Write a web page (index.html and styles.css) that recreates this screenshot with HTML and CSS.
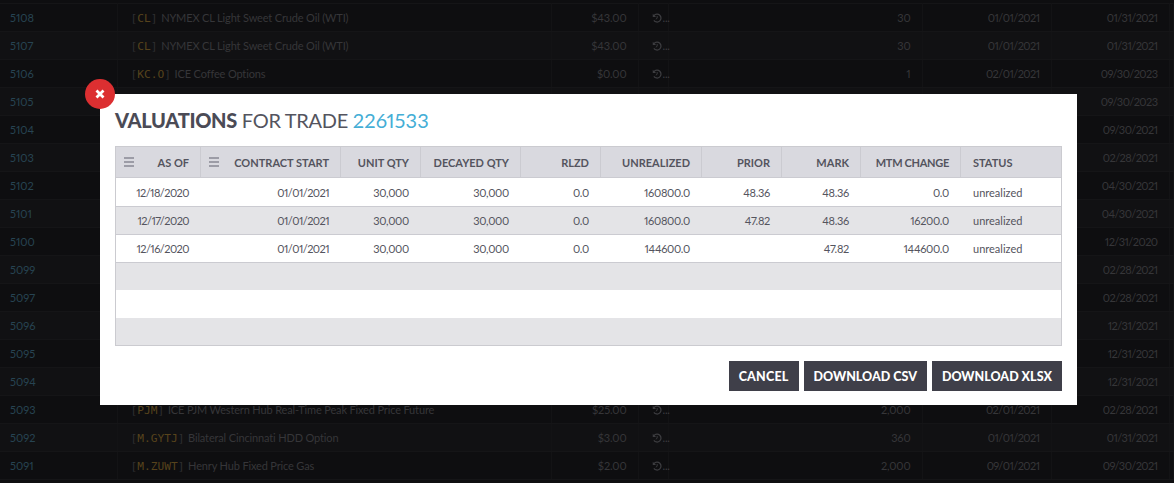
FILE: index.html
```html
<!DOCTYPE html>
<html lang="en">
<head>
<meta charset="utf-8">
<title>Valuations for trade 2261533</title>
<link rel="stylesheet" href="styles.css">
</head>
<body>
<svg class="defs" aria-hidden="true">
  <symbol id="hist" viewBox="0 0 12 12">
    <path d="M2.4 3.2A4.7 4.7 0 1 1 2.2 8.8" fill="none" stroke="currentColor" stroke-width="1.5"/>
    <path d="M.9 .9v4h4z" fill="currentColor"/>
    <path d="M6.2 3.6V6.3L4.6 7.4" fill="none" stroke="currentColor" stroke-width="1.1"/>
  </symbol>
  <symbol id="bars" viewBox="0 0 10 10">
    <path d="M0 0h10v2H0zM0 4h10v2H0zM0 8h10v2H0z" fill="currentColor"/>
  </symbol>
</svg>

<table class="bg">
  <colgroup>
    <col class="b1"><col class="b2"><col class="b3"><col class="b4"><col class="b5"><col class="b6"><col class="b7"><col class="b8">
  </colgroup>
  <tbody>
    <tr><td class="id">5108</td><td><span class="tk"><i>[</i><b>CL</b><i>]</i></span> NYMEX CL Light Sweet Crude Oil (WTI)</td><td class="r">$43.00</td><td class="act"><svg class="h"><use href="#hist"/></svg><span class="dots">...</span></td><td class="r">30</td><td class="r d">01/01/2021</td><td class="r d">01/31/2021</td><td></td></tr>
    <tr><td class="id">5107</td><td><span class="tk"><i>[</i><b>CL</b><i>]</i></span> NYMEX CL Light Sweet Crude Oil (WTI)</td><td class="r">$43.00</td><td class="act"><svg class="h"><use href="#hist"/></svg><span class="dots">...</span></td><td class="r">30</td><td class="r d">01/01/2021</td><td class="r d">01/31/2021</td><td></td></tr>
    <tr><td class="id">5106</td><td><span class="tk"><i>[</i><b>KC.O</b><i>]</i></span> ICE Coffee Options</td><td class="r">$0.00</td><td class="act"><svg class="h"><use href="#hist"/></svg><span class="dots">...</span></td><td class="r">1</td><td class="r d">02/01/2021</td><td class="r d">09/30/2023</td><td></td></tr>
    <tr><td class="id">5105</td><td></td><td></td><td></td><td></td><td></td><td class="r d">09/30/2023</td><td></td></tr>
    <tr><td class="id">5104</td><td></td><td></td><td></td><td></td><td></td><td class="r d">09/30/2021</td><td></td></tr>
    <tr><td class="id">5103</td><td></td><td></td><td></td><td></td><td></td><td class="r d">02/28/2021</td><td></td></tr>
    <tr><td class="id">5102</td><td></td><td></td><td></td><td></td><td></td><td class="r d">04/30/2021</td><td></td></tr>
    <tr><td class="id">5101</td><td></td><td></td><td></td><td></td><td></td><td class="r d">04/30/2021</td><td></td></tr>
    <tr><td class="id">5100</td><td></td><td></td><td></td><td></td><td></td><td class="r d">12/31/2020</td><td></td></tr>
    <tr><td class="id">5099</td><td></td><td></td><td></td><td></td><td></td><td class="r d">02/28/2021</td><td></td></tr>
    <tr><td class="id">5097</td><td></td><td></td><td></td><td></td><td></td><td class="r d">02/28/2021</td><td></td></tr>
    <tr><td class="id">5096</td><td></td><td></td><td></td><td></td><td></td><td class="r d">12/31/2021</td><td></td></tr>
    <tr><td class="id">5095</td><td></td><td></td><td></td><td></td><td></td><td class="r d">12/31/2021</td><td></td></tr>
    <tr><td class="id">5094</td><td></td><td></td><td></td><td></td><td></td><td class="r d">12/31/2021</td><td></td></tr>
    <tr><td class="id">5093</td><td><span class="tk"><i>[</i><b>PJM</b><i>]</i></span> ICE PJM Western Hub Real-Time Peak Fixed Price Future</td><td class="r">$25.00</td><td class="act"><svg class="h"><use href="#hist"/></svg><span class="dots">...</span></td><td class="r">2,000</td><td class="r d">02/01/2021</td><td class="r d">02/28/2021</td><td></td></tr>
    <tr><td class="id">5092</td><td><span class="tk"><i>[</i><b>M.GYTJ</b><i>]</i></span> Bilateral Cincinnati HDD Option</td><td class="r">$3.00</td><td class="act"><svg class="h"><use href="#hist"/></svg><span class="dots">...</span></td><td class="r">360</td><td class="r d">01/01/2021</td><td class="r d">01/31/2021</td><td></td></tr>
    <tr><td class="id">5091</td><td><span class="tk"><i>[</i><b>M.ZUWT</b><i>]</i></span> Henry Hub Fixed Price Gas</td><td class="r">$2.00</td><td class="act"><svg class="h"><use href="#hist"/></svg><span class="dots">...</span></td><td class="r">2,000</td><td class="r d">09/01/2021</td><td class="r d">09/30/2021</td><td></td></tr>
  </tbody>
</table>

<section class="modal">
  <button class="close" type="button" aria-label="Close">
    <svg viewBox="0 0 10 10" class="close-x"><path d="M1.5 1.5l7 7M8.5 1.5l-7 7" stroke="currentColor" stroke-width="2.8" fill="none"/></svg>
  </button>
  <h1 class="title"><strong>VALUATIONS</strong> FOR TRADE <span class="trade">2261533</span></h1>
  <table class="val">
    <colgroup>
      <col class="c1"><col class="c2"><col class="c3"><col class="c4"><col class="c5"><col class="c6"><col class="c7"><col class="c8"><col class="c9"><col class="c10">
    </colgroup>
    <thead>
      <tr>
        <th><div class="hd"><svg class="menu"><use href="#bars"/></svg><span>AS OF</span></div></th>
        <th><div class="hd"><svg class="menu"><use href="#bars"/></svg><span>CONTRACT START</span></div></th>
        <th>UNIT QTY</th><th>DECAYED QTY</th><th>RLZD</th><th>UNREALIZED</th><th>PRIOR</th><th>MARK</th><th class="tight">MTM CHANGE</th><th class="l">STATUS</th>
      </tr>
    </thead>
    <tbody>
      <tr class="first"><td class="d">12/18/2020</td><td class="d">01/01/2021</td><td>30,000</td><td>30,000</td><td>0.0</td><td>160800.0</td><td>48.36</td><td>48.36</td><td>0.0</td><td class="l">unrealized</td></tr>
      <tr><td class="d">12/17/2020</td><td class="d">01/01/2021</td><td>30,000</td><td>30,000</td><td>0.0</td><td>160800.0</td><td>47.82</td><td>48.36</td><td>16200.0</td><td class="l">unrealized</td></tr>
      <tr><td class="d">12/16/2020</td><td class="d">01/01/2021</td><td>30,000</td><td>30,000</td><td>0.0</td><td>144600.0</td><td></td><td>47.82</td><td>144600.0</td><td class="l">unrealized</td></tr>
      <tr class="blank grey"><td colspan="10"></td></tr>
      <tr class="blank"><td colspan="10"></td></tr>
      <tr class="blank grey"><td colspan="10"></td></tr>
    </tbody>
  </table>
  <footer class="actions">
    <button class="btn" type="button">CANCEL</button>
    <button class="btn" type="button">DOWNLOAD CSV</button>
    <button class="btn" type="button">DOWNLOAD XLSX</button>
  </footer>
</section>
</body>
</html>
```

FILE: styles.css
```css
* { box-sizing: border-box; }
html, body { margin: 0; height: 100%; }
body {
  background: #0e0e10;
  font-family: "Lato", "Open Sans", sans-serif;
  font-variant-numeric: proportional-nums;
  overflow: hidden;
  padding-top: 3px;
}
.defs { display: none; }

/* dimmed page behind the dialog */
.bg {
  width: 1174px;
  table-layout: fixed;
  border-collapse: collapse;
  color: #363639;
  font-size: 11px;
  border-top: 1px solid #151517;
}
.b1 { width: 117px; }
.b2 { width: 434px; }
.b3 { width: 87px; }
.b4 { width: 30px; }
.b5 { width: 254px; }
.b6 { width: 129px; }
.b7 { width: 118px; }
.bg tr { height: 28px; }
.bg tr:nth-child(odd) { background: #0e0e10; }
.bg tr:nth-child(even) { background: #111113; }
.bg td {
  padding: 0 11px;
  white-space: nowrap;
  overflow: hidden;
  border-bottom: 1px solid #151517;
  border-right: 1px solid #131315;
  letter-spacing: -0.15px;
}
.bg .act { padding: 0 0 0 13px; letter-spacing: 0; overflow: visible; }
.bg .r { text-align: right; }
.bg .d { letter-spacing: -0.55px; }
.bg .id { color: #274452; padding-left: 10px; letter-spacing: 0; }
.tk { font-family: "DejaVu Sans Mono", monospace; font-size: 11.2px; letter-spacing: 0; margin: 0 1px 0 2px; }
.tk i { font-style: normal; color: #2e2e30; }
.tk b { font-weight: 400; color: #57431c; }
.h { width: 10px; height: 10px; vertical-align: -1px; color: #3d3d40; }
.dots { color: #3d3d40; margin-left: 1px; letter-spacing: -0.2px; }

/* dialog */
.modal {
  position: absolute;
  left: 100px;
  top: 94px;
  width: 977px;
  height: 311px;
  background: #fff;
  padding: 14px 15px 0;
  color: #54545e;
}
.close {
  position: absolute;
  left: -15px;
  top: -15px;
  width: 30px;
  height: 30px;
  border: 0;
  padding: 0;
  border-radius: 50%;
  background: #dc2f31;
  color: #fff;
  display: flex;
  align-items: center;
  justify-content: center;
}
.close-x { width: 10px; height: 10px; }
.title {
  margin: 0 0 14px;
  font-size: 20px;
  line-height: 24px;
  font-weight: 400;
  color: #54545e;
  letter-spacing: -0.3px;
}
.title strong { font-weight: 900; color: #4b4b56; }
.trade { color: #45aed6; letter-spacing: 0.1px; }

.val {
  width: 947px;
  table-layout: fixed;
  border-collapse: separate;
  border-spacing: 0;
  border: 1px solid #cbcbd0;
  font-size: 11px;
}
.c1 { width: 85px; }
.c2 { width: 140px; }
.c3 { width: 80px; }
.c4 { width: 100px; }
.c5 { width: 80px; }
.c6 { width: 101px; }
.c7 { width: 80px; }
.c8 { width: 79px; }
.c9 { width: 100px; }
.val th {
  height: 31px;
  padding: 0 11px 0 8px;
  background: #d9d9df;
  color: #54545e;
  font-weight: 700;
  font-size: 11px;
  text-align: right;
  border-right: 1px solid #cbcbd1;
  border-bottom: 1px solid #cbcbd1;
  white-space: nowrap;
}
.val th:last-child { border-right: 0; }
.val .tight { letter-spacing: -0.3px; }
.hd { display: flex; justify-content: space-between; align-items: center; }
.menu { width: 10px; height: 10px; color: #9c9ca6; }
.val td {
  height: 28px;
  padding: 0 12px 0 4px;
  text-align: right;
  border-bottom: 1px solid #cbcbd1;
  white-space: nowrap;
  letter-spacing: -0.3px;
}
.val td.d { letter-spacing: -0.55px; }
.val .first td { height: 29px; }
.val td.l, .val th.l { text-align: left; padding-left: 12px; letter-spacing: 0; }
.val tbody tr:nth-child(2) td,
.val .grey td { background: #e4e4e7; }
.val .blank td { border-bottom: 0; height: 28px; }
.val .grey td { height: 27px; }

.actions {
  display: flex;
  justify-content: flex-end;
  gap: 5px;
  margin-top: 15px;
}
.btn {
  height: 30px;
  padding: 0 10px;
  border: 0;
  background: #3f3f49;
  color: #fff;
  font-family: inherit;
  font-weight: 900;
  font-size: 12.5px;
}
.btn:first-child { letter-spacing: 0.2px; }
```
